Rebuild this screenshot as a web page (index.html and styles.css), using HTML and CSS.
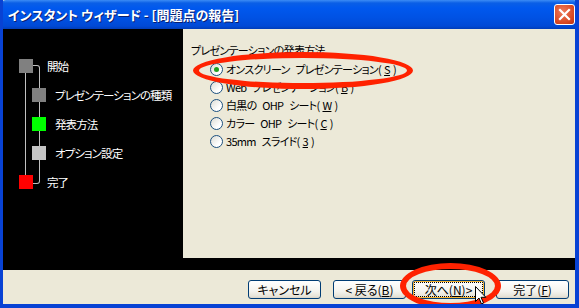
FILE: index.html
```html
<!DOCTYPE html>
<html lang="ja">
<head>
  <meta charset="UTF-8" />
  <title>インスタント ウィザード - [問題点の報告]</title>
  <link rel="stylesheet" href="styles.css">
</head>
<body>

  <div class="window">
    <div class="titlebar">
      <span class="title">インスタント ウィザード - [問題点の報告]</span>
      <button class="close" aria-label="閉じる">
        <svg width="13" height="13" viewBox="0 0 13 13"><path d="M2 2 L11 11 M11 2 L2 11" stroke="#fff" stroke-width="2.2" stroke-linecap="square"/></svg>
      </button>
    </div>

    <div class="main">
      <!-- step tree on the left -->
      <div class="side">
        <div class="tree">
          <div class="step top"><span class="box gray"></span>開始</div>
          <div class="step child"><span class="box gray"></span>プレゼンテーションの種類</div>
          <div class="step child"><span class="box green"></span>発表方法</div>
          <div class="step child"><span class="box light"></span>オプション設定</div>
          <div class="step top"><span class="box red"></span>完了</div>
        </div>
      </div>

      <div class="content">
        <div class="label">プレゼンテーションの発表方法</div>
        <ul class="options">
          <li><span class="radio checked"></span>オンスクリーン プレゼンテーション(<u>S</u>)</li>
          <li><span class="radio"></span>Web プレゼンテーション(<u>B</u>)</li>
          <li><span class="radio"></span>白黒の OHP シート(<u>W</u>)</li>
          <li><span class="radio"></span>カラー OHP シート(<u>C</u>)</li>
          <li><span class="radio"></span>35mm スライド(<u>3</u>)</li>
        </ul>
      </div>
    </div>

    <div class="divider"></div>

    <div class="footer">
      <button class="btn cancel">キャンセル</button>
      <button class="btn back">&lt; 戻る(<u>B</u>)</button>
      <button class="btn next">次へ(<u>N</u>)&gt;</button>
      <button class="btn finish">完了(<u>F</u>)</button>
    </div>

    <!-- red annotation marks drawn over the dialog -->
    <div class="mark mark-option"></div>
    <div class="mark mark-next"></div>
    <svg class="cursor" width="12" height="19" viewBox="0 0 12 19">
      <path d="M0.5 0.5 L0.5 15.5 L4 12 L6.5 18 L8.5 17 L6 11.3 L10.8 11.3 Z" fill="#fff" stroke="#000" stroke-width="1"/>
    </svg>
  </div>

</body>
</html>
```

FILE: styles.css
```css
body {
  margin: 0;
  font-family: "Noto Sans CJK JP", "Liberation Sans", sans-serif;
  font-size: 11px;
  letter-spacing: -0.5px;
  font-feature-settings: "palt";
}
.window {
  position: relative;
  width: 579px;
  height: 308px;
  box-sizing: border-box;
  border: 3px solid #0842d4;
  border-top: none;
  border-right-width: 4px;
  border-bottom-width: 4px;
  background: #ece9d8;
  overflow: hidden;
  display: flex;
  flex-direction: column;
}
.titlebar {
  height: 29px;
  margin: 0 -4px 0 -3px;
  padding: 0 4px 0 8px;
  display: flex;
  align-items: center;
  justify-content: space-between;
  background: linear-gradient(#3c8cf5 0, #0a5fe6 3px, #0058ee 8px, #0052e4 60%, #0049d6 90%, #003cb8 100%);
  border-radius: 6px 6px 0 0;
}
.title {
  color: #fff;
  font-weight: bold;
  font-size: 13px;
  letter-spacing: 0;
  text-shadow: 1px 1px 0 #0a1f6e;
}
.close {
  width: 21px;
  height: 21px;
  padding: 0;
  border: 1px solid #fff;
  border-radius: 3px;
  background: radial-gradient(circle at 40% 35%, #ee7b5c, #d8461f 70%, #bb3210);
  display: flex;
  align-items: center;
  justify-content: center;
}
.main {
  display: flex;
  height: 229px;
}
.side {
  width: 180px;
  background: #000;
  color: #fff;
  font-size: 11.5px;
  letter-spacing: -0.9px;
}
.tree {
  position: relative;
  padding-top: 22px;
}
.tree::before {
  content: "";
  position: absolute;
  left: 22px;
  top: 43px;
  height: 103px;
  border-left: 1px solid #c0c0c0;
}
.tree::after {
  content: "";
  position: absolute;
  left: 30px;
  top: 36px;
  width: 6px;
  height: 117px;
  border: 1px solid #c0c0c0;
  border-left: none;
  border-radius: 0 3px 3px 0;
}
.step {
  height: 29px;
  display: flex;
  align-items: center;
  white-space: nowrap;
}
.step.top {
  padding-left: 16px;
  gap: 14px;
}
.step.child {
  padding-left: 29px;
  gap: 9px;
}
.box {
  position: relative;
  z-index: 1;
  width: 14px;
  height: 14px;
  flex: none;
}
.gray { background: #808080; }
.green { background: #00ff00; }
.light { background: #c4c4c4; }
.red { background: #ff0000; }
.content {
  flex: 1;
  padding: 13px 0 0 8px;
  color: #000;
  font-size: 11px;
  letter-spacing: -0.7px;
  word-spacing: 4px;
}
.label {
  line-height: 16px;
}
.options {
  list-style: none;
  margin: 2px 0 0 19px;
  padding: 0;
}
.options li {
  height: 18px;
  display: flex;
  align-items: center;
  gap: 3px;
  white-space: pre;
}
.options u {
  text-underline-offset: 1px;
}
.radio {
  width: 11px;
  height: 11px;
  border: 1px solid #1c5180;
  border-radius: 50%;
  background: linear-gradient(135deg, #dcdcd4, #fff 70%);
  position: relative;
  flex: none;
}
.radio.checked::after {
  content: "";
  position: absolute;
  left: 3px;
  top: 3px;
  width: 5px;
  height: 5px;
  border-radius: 50%;
  background: #21a121;
}
.divider {
  height: 12px;
  background: #000;
}
.footer {
  flex: 1;
  display: flex;
  justify-content: flex-end;
  align-items: flex-start;
  padding: 10px 6px 0 0;
}
.btn {
  width: 73px;
  height: 19px;
  padding: 0;
  font: inherit;
  font-size: 12px;
  line-height: 16px;
  color: #000;
  border: 1px solid #003c74;
  border-radius: 3px;
  background: linear-gradient(#fff, #f4f3ee 60%, #e6e3d8 90%, #d6d0c5);
}
.btn.back { margin-left: 12px; }
.btn.next {
  margin-left: 6px;
  box-shadow: inset 0 0 0 1px #f8b330;
  outline: 1px dotted #000;
  outline-offset: -3px;
}
.btn.finish { margin-left: 11px; }
.mark {
  position: absolute;
  border: 6px solid #ff2200;
  border-radius: 50%;
  box-sizing: border-box;
}
.mark-option {
  left: 190px;
  top: 52px;
  width: 220px;
  height: 37px;
}
.mark-next {
  left: 397px;
  top: 263px;
  width: 101px;
  height: 46px;
}
.cursor {
  position: absolute;
  left: 472px;
  top: 286px;
}
```
